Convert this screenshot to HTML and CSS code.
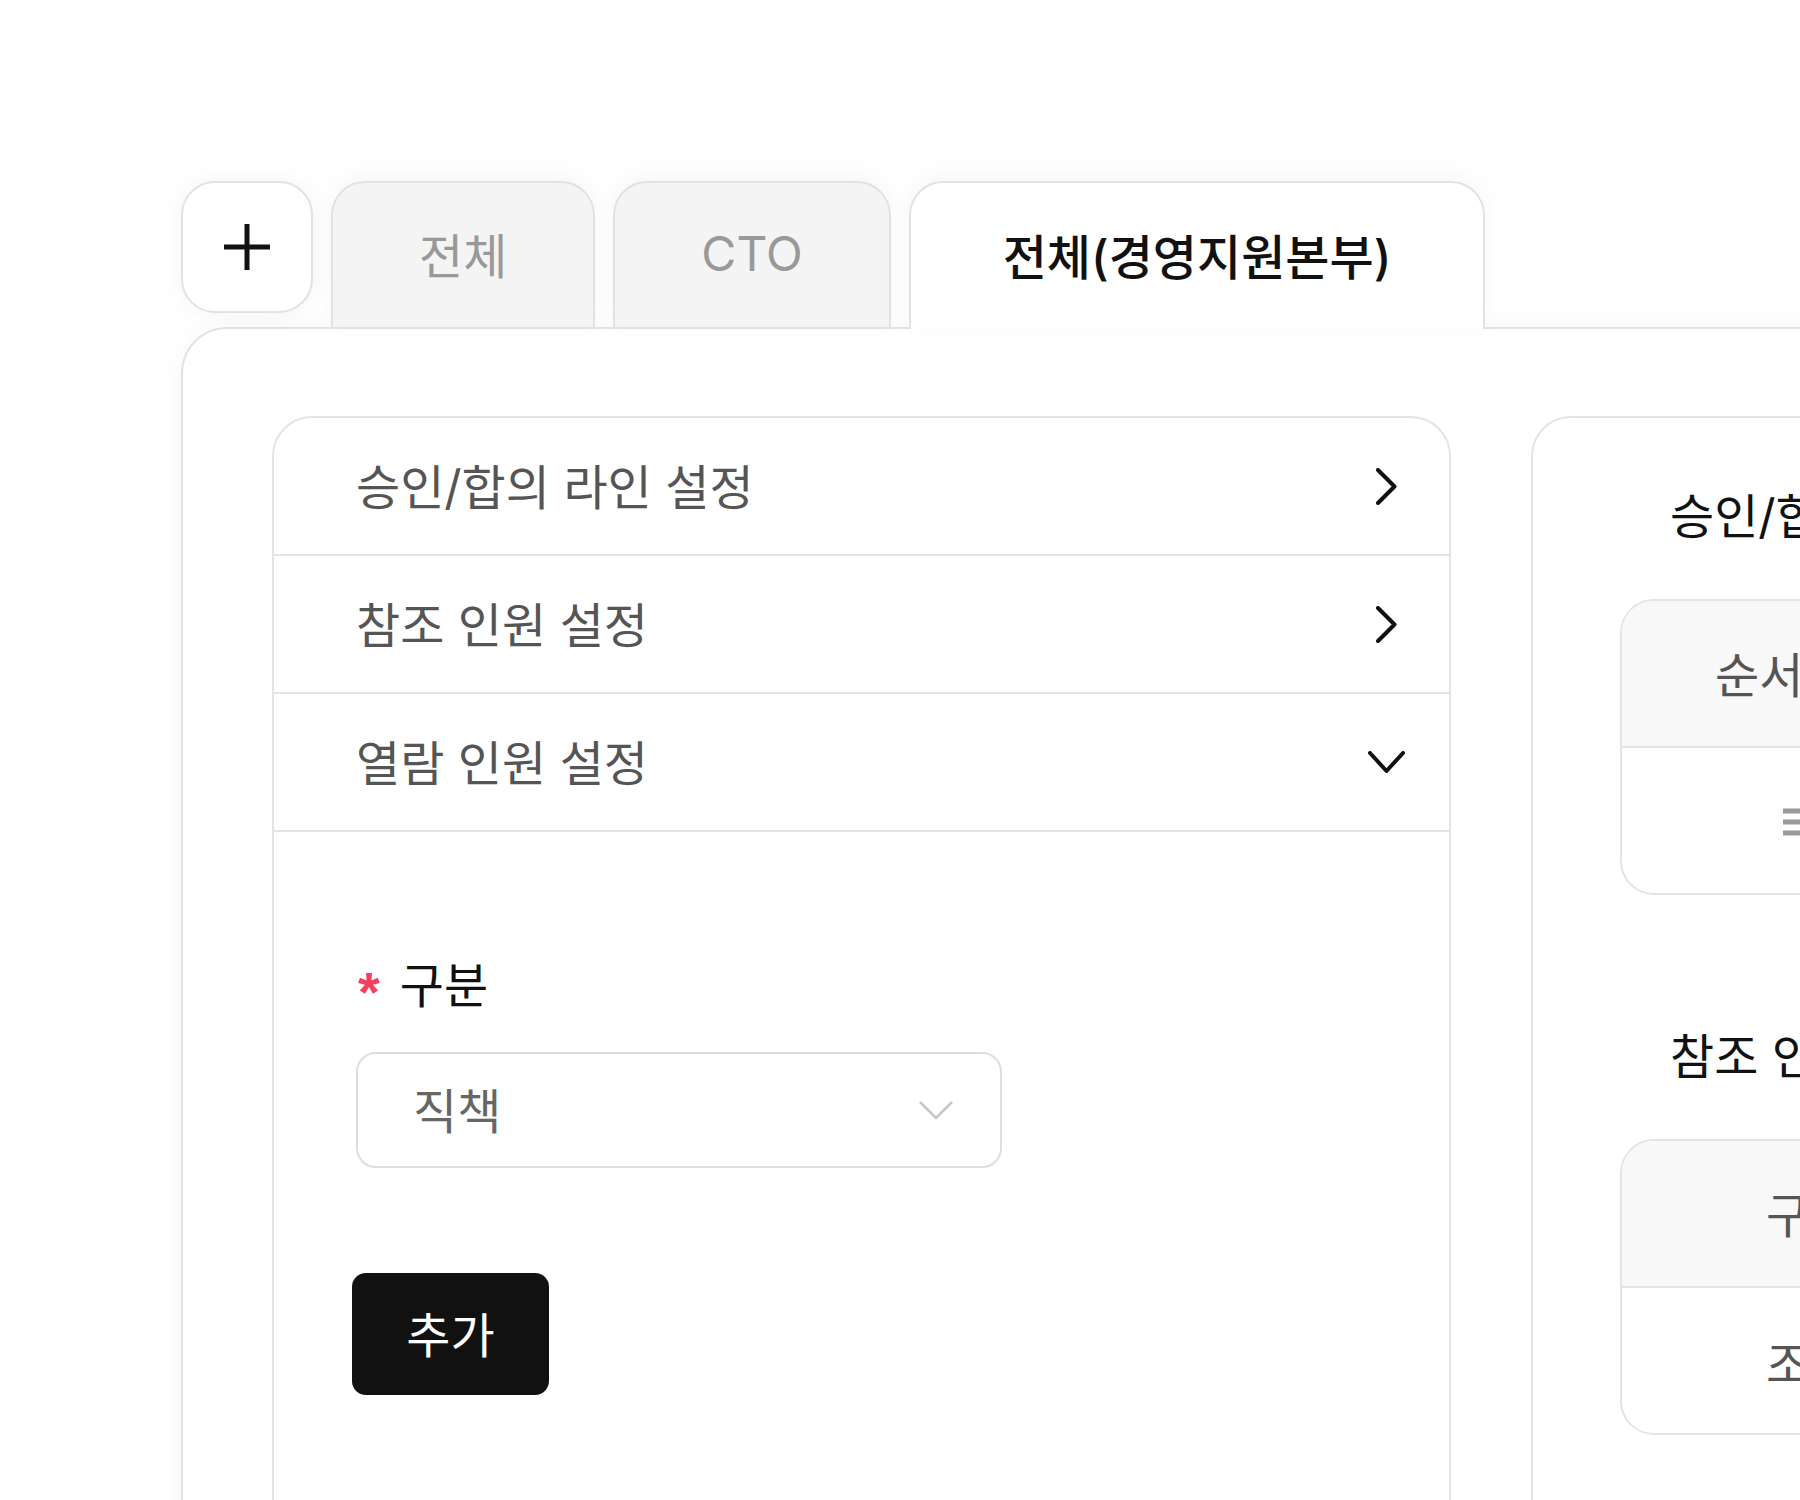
FILE: index.html
```html
<!DOCTYPE html>
<html lang="ko">
<head>
    <meta charset="UTF-8">
    <meta name="viewport" content="width=device-width, initial-scale=1.0">
    <title>결재선 설정</title>
    <link rel="stylesheet" href="styles.css">
</head>
<body>
    <div class="page">
        <div class="tabs">
            <button class="tab-add" aria-label="추가">
                <svg width="46" height="46" viewBox="0 0 46 46">
                    <path d="M23 0 V46 M0 23 H46" stroke="#111" stroke-width="5" fill="none"/>
                </svg>
            </button>
            <div class="tab">전체</div>
            <div class="tab">CTO</div>
            <div class="tab active">전체(경영지원본부)</div>
        </div>

        <div class="panel">
            <!-- left: settings accordion -->
            <div class="settings">
                <div class="acc-row">
                    <span>승인/합의 라인 설정</span>
                    <svg class="chev-right" width="21" height="37" viewBox="0 0 21 37">
                        <path d="M2 2 L18.5 18.5 L2 35" stroke="#111" stroke-width="4" fill="none" stroke-linecap="round" stroke-linejoin="round"/>
                    </svg>
                </div>
                <div class="acc-row">
                    <span>참조 인원 설정</span>
                    <svg class="chev-right" width="21" height="37" viewBox="0 0 21 37">
                        <path d="M2 2 L18.5 18.5 L2 35" stroke="#111" stroke-width="4" fill="none" stroke-linecap="round" stroke-linejoin="round"/>
                    </svg>
                </div>
                <div class="acc-row">
                    <span>열람 인원 설정</span>
                    <svg class="chev-down" width="37" height="23" viewBox="0 0 37 23">
                        <path d="M2 2 L18.5 20 L35 2" stroke="#111" stroke-width="4" fill="none" stroke-linecap="round" stroke-linejoin="round"/>
                    </svg>
                </div>
                <div class="acc-body">
                    <div class="field-label"><span class="req">*</span><span>구분</span></div>
                    <div class="select">
                        <span>직책</span>
                        <svg width="36" height="22" viewBox="0 0 36 22">
                            <path d="M2 3 L18 19 L34 3" stroke="#c8c8c8" stroke-width="2.5" fill="none"/>
                        </svg>
                    </div>
                    <button class="btn-add">추가</button>
                </div>
            </div>

            <!-- right: preview -->
            <div class="preview">
                <h3 class="preview-title">승인/합의 라인</h3>
                <div class="table">
                    <div class="thead">
                        <span class="col-order">순서</span>
                        <span>결재자</span>
                    </div>
                    <div class="tbody">
                        <svg class="drag" width="30" height="30" viewBox="0 0 30 30">
                            <path d="M0 5 H30 M0 16 H30 M0 27 H30" stroke="#9a9a9a" stroke-width="5"/>
                        </svg>
                    </div>
                </div>

                <h3 class="preview-title">참조 인원</h3>
                <div class="table">
                    <div class="thead">
                        <span class="col-type">구분</span>
                    </div>
                    <div class="tbody">
                        <span class="col-type">조직</span>
                    </div>
                </div>
            </div>
        </div>
    </div>
</body>
</html>
```

FILE: styles.css
```css
body {
    margin: 0;
    background: #fff;
    font-family: "Inter", "Noto Sans CJK KR", sans-serif;
    color: #111;
    overflow: hidden;
    height: 1500px;
}

.page {
    width: 2400px;
    padding: 181px 0 0 181px;
}

.tabs {
    display: flex;
    align-items: flex-start;
    gap: 18px;
}

.tab-add {
    width: 132px;
    height: 132px;
    border: 2px solid #e2e2e2;
    border-radius: 34px;
    background: #fff;
    display: flex;
    align-items: center;
    justify-content: center;
    padding: 0;
    box-shadow: 0 0 24px rgba(0, 0, 0, 0.05);
}

.tab {
    height: 146px;
    padding: 0 86px 4px;
    box-sizing: border-box;
    border: 2px solid #e2e2e2;
    border-bottom: none;
    border-radius: 34px 34px 0 0;
    background: #f4f4f4;
    color: #999;
    font-size: 48px;
    display: flex;
    align-items: center;
    box-shadow: 0 -6px 24px rgba(0, 0, 0, 0.04);
}

.tab.active {
    background: #fff;
    color: #111;
    font-weight: 500;
    height: 148px;
    padding: 0 92px 4px;
    margin-bottom: -2px;
    position: relative;
    z-index: 1;
}

.panel {
    display: grid;
    grid-template-columns: 1179px 1200px;
    gap: 80px;
    align-items: start;
    padding: 87px 0 0 89px;
    border: 2px solid #e2e2e2;
    border-right: none;
    border-bottom: none;
    border-radius: 46px 0 0 0;
    height: 1400px;
    box-shadow: 0 0 24px rgba(0, 0, 0, 0.04);
}

.settings {
    border: 2px solid #e4e4e4;
    border-radius: 40px;
    height: 1300px;
}

.acc-row {
    height: 138px;
    border-bottom: 2px solid #e4e4e4;
    display: flex;
    align-items: center;
    justify-content: space-between;
    padding: 0 52px 4px 82px;
    box-sizing: border-box;
    font-size: 48px;
    color: #555;
}

.acc-row .chev-right,
.acc-row .chev-down {
    margin-top: 4px;
}

.acc-row .chev-down {
    margin-right: -8px;
}

.acc-body {
    padding: 124px 0 0 82px;
}

.field-label {
    display: flex;
    align-items: flex-start;
    font-size: 48px;
    line-height: 60px;
    color: #111;
    margin-bottom: 32px;
}

.req {
    color: #f43f5e;
    font-family: "Liberation Sans", sans-serif;
    font-weight: 700;
    font-size: 56px;
    line-height: 56px;
    margin: 8px 20px 0 2px;
}

.select {
    width: 646px;
    height: 116px;
    box-sizing: border-box;
    border: 2px solid #dedede;
    border-radius: 20px;
    display: flex;
    align-items: center;
    justify-content: space-between;
    padding: 0 46px 4px 55px;
    font-size: 48px;
    color: #666;
}

.select svg {
    margin-top: 4px;
}

.btn-add {
    margin-top: 105px;
    margin-left: -4px;
    width: 197px;
    height: 122px;
    padding: 0 0 4px;
    border: none;
    border-radius: 14px;
    background: #111;
    color: #fff;
    font-family: inherit;
    font-size: 48px;
}

.preview {
    border: 2px solid #e4e4e4;
    border-radius: 40px;
    height: 1300px;
    padding: 69px 0 0 87px;
}

.preview-title {
    margin: 0;
    padding-left: 50px;
    font-size: 48px;
    font-weight: 400;
    line-height: 60px;
    color: #111;
}

.table {
    border: 2px solid #e4e4e4;
    border-radius: 34px;
    overflow: hidden;
    margin: 52px 0 132px;
}

.thead {
    height: 147px;
    background: #f8f8f8;
    border-bottom: 2px solid #e4e4e4;
    display: flex;
    align-items: center;
    font-size: 48px;
    color: #555;
    gap: 200px;
    padding-bottom: 4px;
    box-sizing: border-box;
}

.tbody {
    height: 145px;
    display: flex;
    align-items: center;
    font-size: 48px;
    color: #555;
}

.col-order {
    padding-left: 93px;
}

.drag {
    margin-left: 161px;
}

.col-type {
    padding-left: 144px;
}
```
